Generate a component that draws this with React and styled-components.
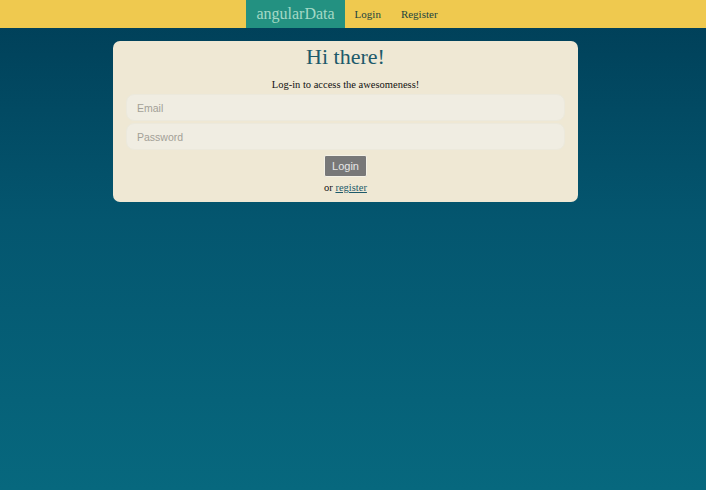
import React from "react";
import styled, { createGlobalStyle } from "styled-components";

const Global = createGlobalStyle`
  html, body {
    margin: 0;
    padding: 0;
    height: 100%;
  }
  body {
    font-family: "Liberation Serif", "Times New Roman", serif;
    background: #06647c;
    min-height: 490px;
  }
`;

const Page = styled.div`
  min-height: 490px;
  background: linear-gradient(to bottom, #003e57 0%, #04566f 45%, #07687e 100%);
`;

const Navbar = styled.nav`
  height: 28px;
  background: #efc94f;
  display: flex;
  justify-content: center;
  align-items: stretch;
  padding: 0 15px 0 3px;
`;

const Brand = styled.a`
  display: flex;
  align-items: center;
  padding: 0 10px;
  background: #239181;
  color: #a4d9c6;
  font-size: 16px;
  text-decoration: none;
`;

const NavLink = styled.a`
  display: flex;
  align-items: center;
  padding: 0 10px;
  color: #22443f;
  font-size: 11px;
  text-decoration: none;
`;

const Main = styled.main`
  display: flex;
  justify-content: center;
  padding: 13px 15px 0 0;
`;

const Card = styled.section`
  width: 465px;
  box-sizing: border-box;
  background: #efe8d4;
  border-radius: 7px;
  padding: 0 13px 8px;
  display: flex;
  flex-direction: column;
  align-items: center;
`;

const Title = styled.h1`
  margin: 0;
  font-weight: normal;
  font-size: 22px;
  line-height: 32px;
  color: #1d5a6a;
`;

const Subtitle = styled.p`
  margin: 5px 0 3px;
  font-size: 10.5px;
  line-height: 13px;
  color: #111;
`;

const Input = styled.input`
  width: 100%;
  box-sizing: border-box;
  height: 27px;
  margin-bottom: 2px;
  border: 1px solid #ece9dc;
  border-radius: 8px;
  background: #f0ede2;
  padding: 0 10px;
  font-family: "Liberation Sans", Arial, sans-serif;
  font-size: 10.5px;
  outline: none;
  &::placeholder {
    color: #a3a097;
  }
`;

const Button = styled.button`
  margin-top: 3px;
  height: 22px;
  width: 43px;
  padding: 0;
  background: #787878;
  color: #e6e6e6;
  border: 1px solid #f4f1e6;
  border-radius: 2px;
  font-family: "Liberation Sans", Arial, sans-serif;
  font-size: 11px;
`;

const Footer = styled.p`
  margin: 4px 0 0;
  font-size: 10.5px;
  line-height: 13px;
  color: #111;
  a {
    color: #1d5a6a;
  }
`;

export default function App() {
  return (
    <Page>
      <Global />
      <Navbar>
        <Brand href="#">angularData</Brand>
        <NavLink href="#">Login</NavLink>
        <NavLink href="#">Register</NavLink>
      </Navbar>
      <Main>
        <Card>
          <Title>Hi there!</Title>
          <Subtitle>Log-in to access the awesomeness!</Subtitle>
          <Input placeholder="Email" />
          <Input type="password" placeholder="Password" />
          <Button>Login</Button>
          <Footer>
            or <a href="#">register</a>
          </Footer>
        </Card>
      </Main>
    </Page>
  );
}
